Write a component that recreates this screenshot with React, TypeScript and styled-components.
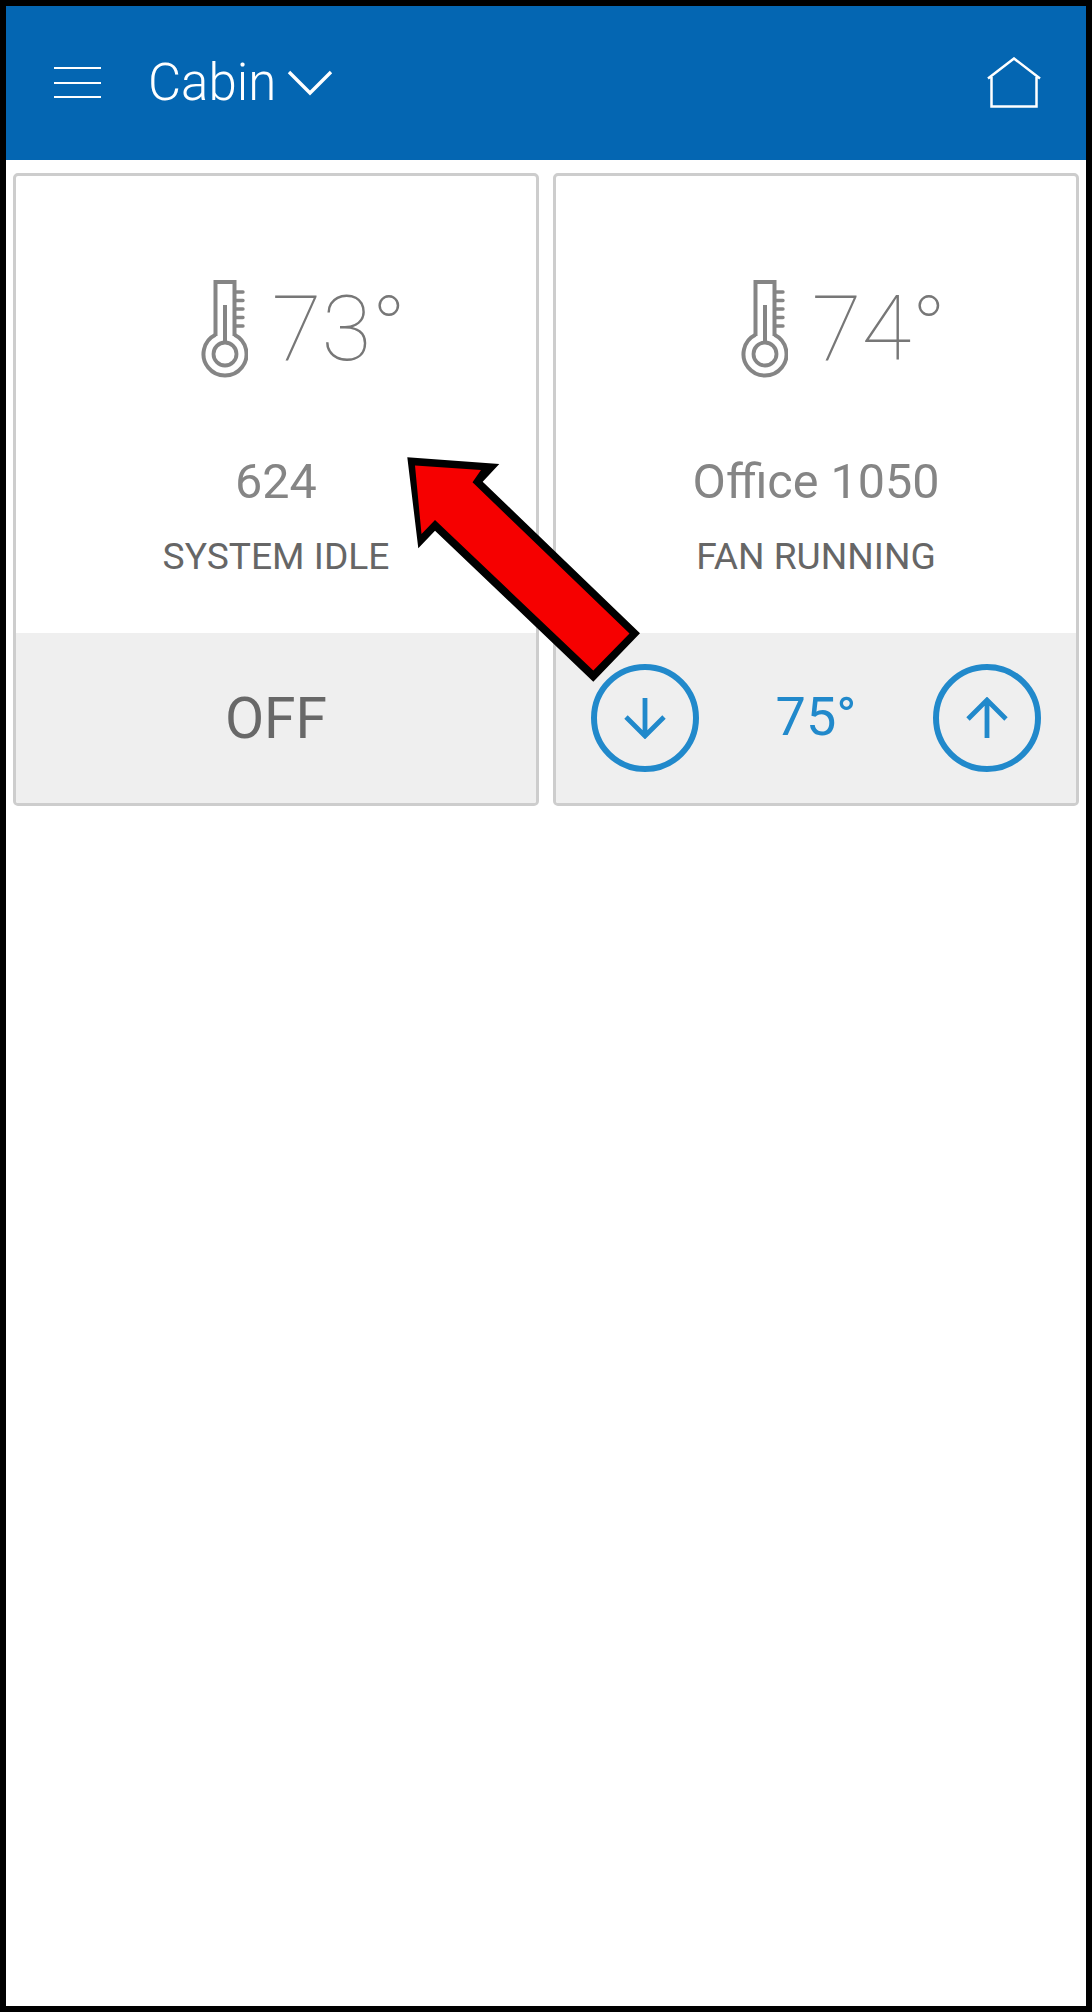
import React from "react";
import styled, { createGlobalStyle } from "styled-components";

const Global = createGlobalStyle`
  html, body { margin: 0; padding: 0; background: #fff; }
  * { box-sizing: border-box; }
`;

const Frame = styled.div`
  position: relative;
  width: 1092px;
  height: 2012px;
  border: 6px solid #000;
  background: #fff;
  font-family: Roboto, "Liberation Sans", sans-serif;
  overflow: hidden;
`;

const Header = styled.header`
  height: 154px;
  background: #0466b2;
  display: flex;
  align-items: center;
  padding: 0 45px 0 48px;
  color: #fff;
`;

const Burger = styled.div`
  width: 47px;
  height: 31px;
  margin-top: -1px;
  display: flex;
  flex-direction: column;
  justify-content: space-between;
  span {
    display: block;
    height: 2px;
    background: #fff;
  }
`;

const Title = styled.div`
  margin: -2px 0 0 47px;
  font-size: 51px;
  font-weight: 300;
  line-height: 1;
  color: #fff;
`;

const Chevron = styled.svg`
  margin-left: 11px;
  width: 46px;
  height: 26px;
`;

const HomeIcon = styled.svg`
  margin-left: auto;
  width: 54px;
  height: 52px;
`;

const Cards = styled.main`
  display: grid;
  grid-template-columns: 1fr 1fr;
  gap: 14px;
  padding: 13px 7px;
`;

const Card = styled.section`
  height: 633px;
  border: 3px solid #cdcdcd;
  border-radius: 5px;
  display: flex;
  flex-direction: column;
  overflow: hidden;
`;

const CardBody = styled.div`
  flex: 1;
  display: flex;
  flex-direction: column;
  align-items: center;
  padding-top: 104px;
`;

const TempRow = styled.div`
  display: flex;
  align-items: flex-start;
  padding-left: 54px;
  height: 98px;
`;

const Thermo = styled.svg`
  width: 48px;
  height: 98px;
  flex: none;
`;

const Temp = styled.div`
  margin: 4px 0 0 24px;
  font-size: 91px;
  font-weight: 100;
  line-height: 90px;
  color: #777;
`;

const Name = styled.div`
  margin-top: 77px;
  font-size: 48.500px;
  line-height: 54px;
  font-weight: 400;
  color: #858585;
`;

const Status = styled.div`
  margin-top: 26px;
  font-size: 37.200px;
  line-height: 42px;
  font-weight: 400;
  color: #666;
`;

const Footer = styled.div<{ $split?: boolean }>`
  height: 170px;
  background: #efefef;
  display: flex;
  align-items: center;
  justify-content: ${(p) => (p.$split ? "space-between" : "center")};
  padding: 0 35px 0 35px;
`;

const Mode = styled.div`
  font-size: 57px;
  line-height: 1;
  color: #686868;
`;

const Setpoint = styled.div`
  font-size: 54px;
  line-height: 1;
  color: #2189cb;
  margin-top: -2px;
`;

const RoundButton = styled.button`
  width: 108px;
  height: 108px;
  padding: 0;
  border: 6px solid #2189cb;
  border-radius: 50%;
  background: transparent;
  display: flex;
  align-items: center;
  justify-content: center;
`;

const ArrowIcon = styled.svg`
  width: 42px;
  height: 42px;
`;

const Pointer = styled.svg`
  position: absolute;
  left: -6px;
  top: -6px;
  width: 1092px;
  height: 2012px;
  pointer-events: none;
`;

const Thermometer = () => (
  <Thermo viewBox="-1 0 48 98" fill="none" stroke="#858585">
    <path d="M14.500 56V2h19v54" strokeWidth="4" />
    <path d="M14.500 54.800A21.500 21.500 0 1 0 33.500 54.800" strokeWidth="4" />
    <circle cx="24" cy="74" r="11.500" strokeWidth="3.800" />
    <path d="M24 25v38" strokeWidth="4" />
    <path d="M34 12h8M34 20.500h8M34 29h8M34 37.500h8M34 46h8" strokeWidth="3.400" strokeLinecap="round" />
  </Thermo>
);

const tiles = [
  { temp: "73°", name: "624", status: "SYSTEM IDLE", setpoint: null },
  { temp: "74°", name: "Office 1050", status: "FAN RUNNING", setpoint: "75°" },
];

export default function App() {
  return (
    <>
      <Global />
      <Frame>
        <Header>
          <Burger>
            <span />
            <span />
            <span />
          </Burger>
          <Title>Cabin</Title>
          <Chevron viewBox="0 0 46 26" fill="none" stroke="#fff" strokeWidth="3.400">
            <path d="M2 2l21 21L44 2" />
          </Chevron>
          <HomeIcon viewBox="0 0 54 52" fill="none" stroke="#fff" strokeWidth="2.500">
            <path d="M1 21.500L27 1.500l26 20M4.500 20v29.500h45V20" />
          </HomeIcon>
        </Header>
        <Cards>
          {tiles.map((t) => (
            <Card key={t.name}>
              <CardBody>
                <TempRow>
                  <Thermometer />
                  <Temp>{t.temp}</Temp>
                </TempRow>
                <Name>{t.name}</Name>
                <Status>{t.status}</Status>
              </CardBody>
              {t.setpoint ? (
                <Footer $split>
                  <RoundButton aria-label="Lower">
                    <ArrowIcon viewBox="0 0 42 42" fill="none" stroke="#2189cb" strokeWidth="4.800">
                      <path d="M21 1v37M2 20l19 19 19-19" />
                    </ArrowIcon>
                  </RoundButton>
                  <Setpoint>{t.setpoint}</Setpoint>
                  <RoundButton aria-label="Raise">
                    <ArrowIcon viewBox="0 0 42 42" fill="none" stroke="#2189cb" strokeWidth="4.800">
                      <path d="M21 41V4M2 22L21 3l19 19" />
                    </ArrowIcon>
                  </RoundButton>
                </Footer>
              ) : (
                <Footer>
                  <Mode>OFF</Mode>
                </Footer>
              )}
            </Card>
          ))}
        </Cards>
        <Pointer viewBox="0 0 1092 2012">
          <polygon points="407.300,457.300 499.300,464 482.700,481.700 640,633.300 593.300,681.700 435,530.700 418.300,548.300" fill="#000" />
          <polygon points="415,465.500 481,470 472.500,482.300 629.500,633.500 593.300,670.500 435,520 421.500,534" fill="#f60000" />
        </Pointer>
      </Frame>
    </>
  );
}
